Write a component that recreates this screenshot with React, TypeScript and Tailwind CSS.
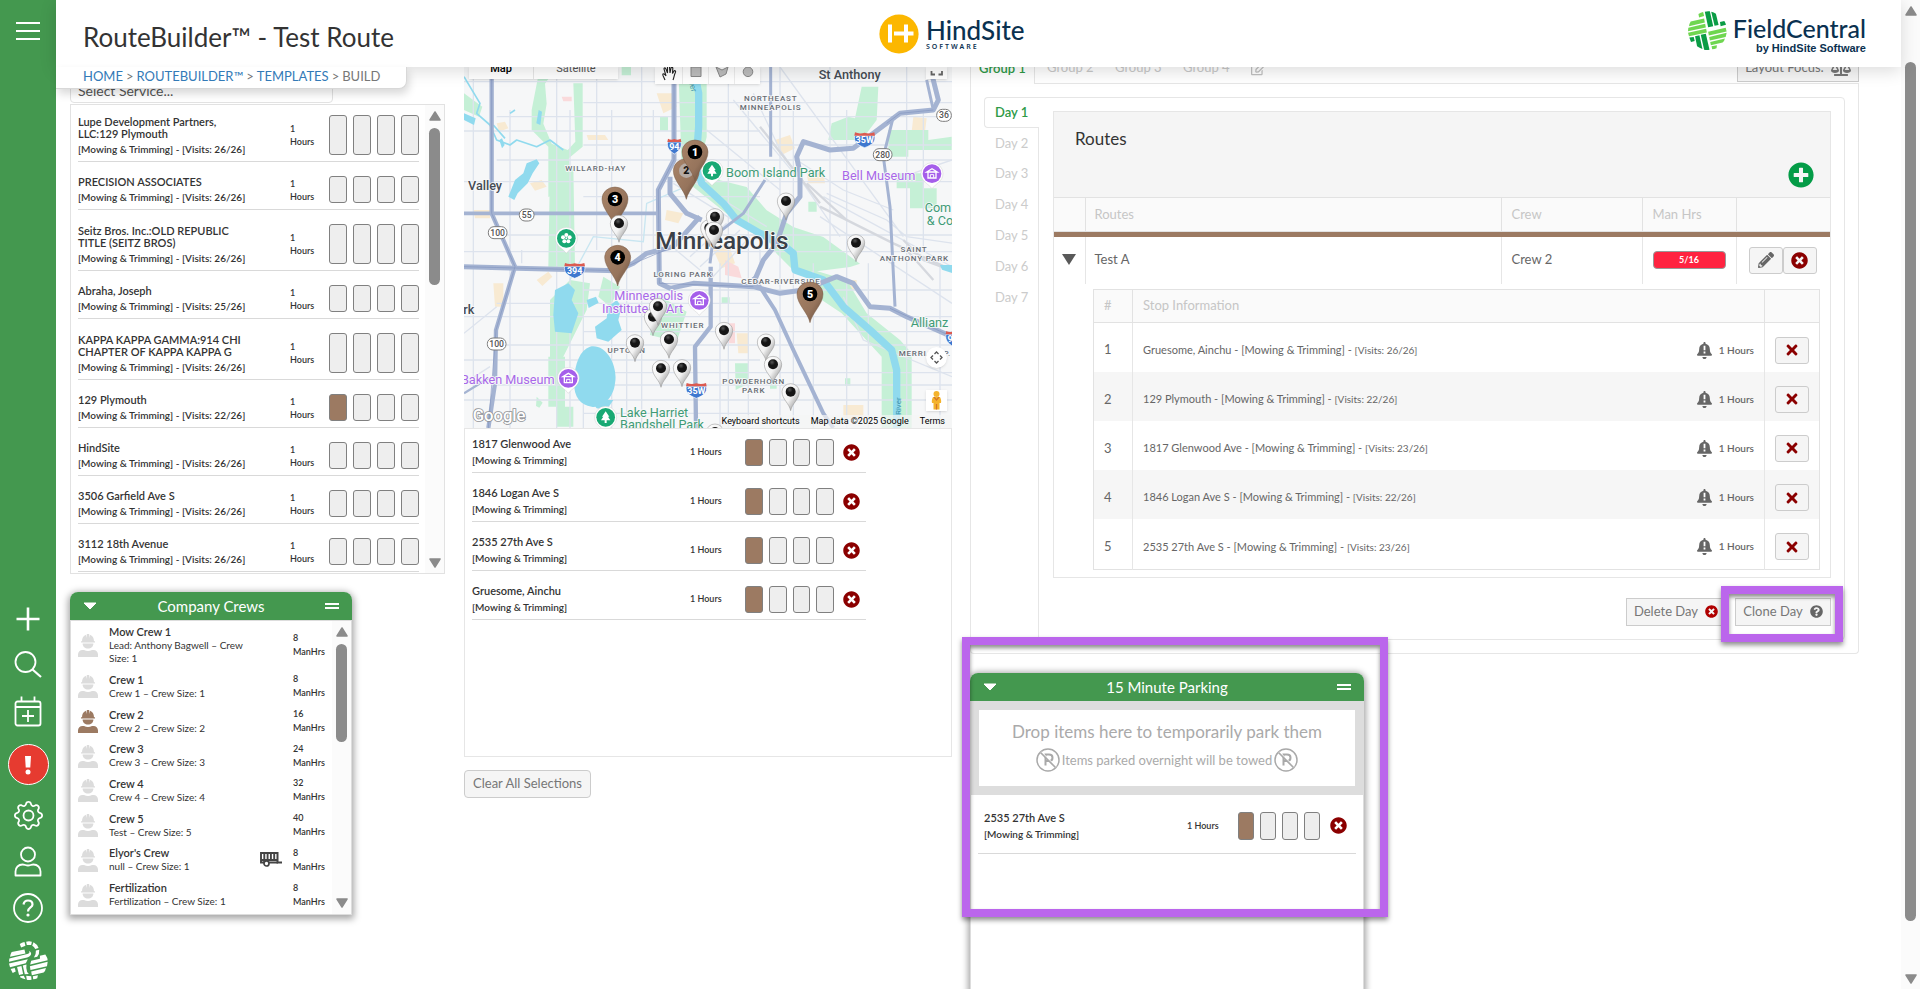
import React from "react";
import {
  FaBalanceScale,
  FaBell,
  FaPencilAlt,
  FaPlusCircle,
  FaQuestionCircle,
  FaRegEdit,
  FaTimes,
  FaTimesCircle,
} from "react-icons/fa";
import { BsGear } from "react-icons/bs";

type Site = { name: string[]; visits: string; filled?: boolean };

const SITES: Site[] = [
  { name: ["Lupe Development Partners,", "LLC:129 Plymouth"], visits: "26/26" },
  { name: ["PRECISION ASSOCIATES"], visits: "26/26" },
  { name: ["Seitz Bros. Inc.:OLD REPUBLIC", "TITLE (SEITZ BROS)"], visits: "26/26" },
  { name: ["Abraha, Joseph"], visits: "25/26" },
  { name: ["KAPPA KAPPA GAMMA:914 CHI", "CHAPTER OF KAPPA KAPPA G"], visits: "26/26" },
  { name: ["129 Plymouth"], visits: "22/26", filled: true },
  { name: ["HindSite"], visits: "26/26" },
  { name: ["3506 Garfield Ave S"], visits: "26/26" },
  { name: ["3112 18th Avenue"], visits: "26/26" },
];

const CREWS = [
  { name: "Mow Crew 1", info: "Lead: Anthony Bagwell – Crew Size: 1", hrs: 8 },
  { name: "Crew 1", info: "Crew 1 – Crew Size: 1", hrs: 8 },
  { name: "Crew 2", info: "Crew 2 – Crew Size: 2", hrs: 16, active: true },
  { name: "Crew 3", info: "Crew 3 – Crew Size: 3", hrs: 24 },
  { name: "Crew 4", info: "Crew 4 – Crew Size: 4", hrs: 32 },
  { name: "Crew 5", info: "Test – Crew Size: 5", hrs: 40 },
  { name: "Elyor's Crew", info: "null – Crew Size: 1", hrs: 8, trailer: true },
  { name: "Fertilization", info: "Fertilization – Crew Size: 1", hrs: 8 },
];

const SELECTED = ["1817 Glenwood Ave", "1846 Logan Ave S", "2535 27th Ave S", "Gruesome, Ainchu"];

const STOPS = [
  { name: "Gruesome, Ainchu", visits: "26/26" },
  { name: "129 Plymouth", visits: "22/26" },
  { name: "1817 Glenwood Ave", visits: "23/26" },
  { name: "1846 Logan Ave S", visits: "22/26" },
  { name: "2535 27th Ave S", visits: "23/26" },
];

function WeaveLogo({ className }: { className: string }) {
  return (
    <svg viewBox="0 0 116 116" className={className} aria-hidden="true">
      <g fill="#6fd650">
        <path d="M31 9 Q38 4 45 3 L48 15 L33 19Z" />
        <path d="M8 31 L48 22 L50 34 L3 45 Q4 37 8 31Z" />
        <path d="M1 50 L51 38 L53 49 L0 60Z" />
        <path d="M0 65 L54 53 L56 64 L3 75Z" />
        <path d="M60 62 L112 50 L115 61 L62 73Z" />
        <path d="M63 77 L115 65 L112 77 L65 88Z" />
        <path d="M66 92 L110 82 Q108 90 103 94 L68 102Z" />
        <path d="M70 105 L86 102 L85 111 Q79 114 72 114Z" />
      </g>
      <g fill="#0a9c45">
        <path d="M50 2 Q58 0 65 1 L75 45 L60 48Z" />
        <path d="M69 2 Q77 4 83 8 L91 42 L79 44Z" />
        <path d="M95 33 L108 30 Q112 36 113 41 L97 45Z" />
        <path d="M4 79 L17 77 L20 89 L9 92Z" />
        <path d="M21 75 L34 72 L43 113 Q34 110 27 105Z" />
        <path d="M38 71 L53 68 L64 115 Q56 117 48 115Z" />
      </g>
    </svg>
  );
}

function WeaveMark({ className }: { className: string }) {
  return (
    <svg viewBox="0 0 116 116" className={className} fill="#fff" aria-hidden="true">
      <path d="M32 9 Q38 5 46 3 L49 14 L36 19Z" />
      <path d="M51 2 Q60 0 68 2 L66 12 L53 12Z" />
      <path d="M73 4 Q84 10 88 21 L78 24 Q75 16 69 14Z" />
      <path d="M80 28 L90 26 Q91 38 84 47 L74 49 Q81 40 80 28Z" />
      <path d="M8 33 L46 25 L49 37 L3 47 Q4 39 8 33Z" />
      <path d="M1 52 L57 38 Q63 36 60 30 Q70 36 63 44 Q60 47 54 49 L0 62Z" />
      <path d="M0 67 L56 54 L50 66 L3 78Z" />
      <path d="M66 59 L92 53 V44 L108 40 Q115 50 115 57 L63 70Z" />
      <path d="M62 75 L115 62 L113 75 L64 86Z" />
      <path d="M66 91 L110 80 Q108 90 103 94 L68 102Z" />
      <path d="M5 83 L17 80 L20 91 L11 95Z" />
      <path d="M24 77 L37 74 L42 98 L30 101Z" />
      <path d="M41 73 L52 70 Q50 80 54 92 L59 98 L47 99Z" />
      <path d="M33 105 L44 103 L49 114 Q41 112 33 108Z" />
      <path d="M51 103 L66 105 L67 115 Q59 117 53 115Z" />
      <path d="M71 105 L86 102 L84 111 Q79 114 72 114Z" />
    </svg>
  );
}

function Arrow({ up }: { up?: boolean }) {
  return (
    <svg viewBox="0 0 12 10" className="h-[10px] w-3 shrink-0" aria-hidden="true">
      <path
        d={up ? "M6 1 L11 9 H1Z" : "M6 9 L11 1 H1Z"}
        fill="#8b8b8b"
        stroke="#8b8b8b"
        strokeWidth="1.5"
        strokeLinejoin="round"
      />
    </svg>
  );
}

function ScrollTrack({ thumb, className }: { thumb: string; className: string }) {
  return (
    <div className={"flex shrink-0 flex-col items-center bg-[#fbfbfb] " + className}>
      <Arrow up />
      <div className={"w-[11px] rounded-full bg-[#8b8b8b] " + thumb} />
      <div className="flex-1" />
      <Arrow />
    </div>
  );
}

function DayBoxes({ filled, className }: { filled?: boolean; className: string }) {
  return (
    <div className={"flex shrink-0 gap-[6px] " + className}>
      {[0, 1, 2, 3].map((i) => (
        <span
          key={i}
          className={
            "flex-1 rounded-[3px] border border-[#808080] " +
            (filled && i === 0 ? "bg-[#9c7a62]" : "bg-[#eeeeee]")
          }
        />
      ))}
    </div>
  );
}

function RemoveButton({ className }: { className?: string }) {
  return (
    <button type="button" aria-label="Remove" className={className}>
      <FaTimesCircle className="size-[17px] text-[#8b0000]" />
    </button>
  );
}

function Sidebar() {
  const line = { fill: "none", stroke: "#fff", strokeWidth: 1.8 } as const;
  return (
    <nav className="flex w-14 shrink-0 flex-col items-center bg-[#44984f] text-white">
      <button type="button" aria-label="Menu" className="mt-[21px] flex h-5 w-6 flex-col justify-between py-px">
        <span className="h-[2px] w-full bg-white" />
        <span className="h-[2px] w-full bg-white" />
        <span className="h-[2px] w-full bg-white" />
      </button>
      <div className="flex-1" />
      <button type="button" aria-label="Add">
        <svg viewBox="0 0 24 24" className="size-6">
          <path d="M12 0.500V23.500M0.500 12H23.500" {...line} strokeWidth="2.600" />
        </svg>
      </button>
      <button type="button" aria-label="Search" className="mt-[19px]">
        <svg viewBox="0 0 28 28" className="size-7">
          <circle cx="11.500" cy="12" r="10" {...line} />
          <path d="M18.500 19.500L27 27" {...line} strokeWidth="2.200" />
        </svg>
      </button>
      <button type="button" aria-label="Schedule" className="mt-[18px]">
        <svg viewBox="0 0 28 31" className="h-[31px] w-7">
          <rect x="1.500" y="5.500" width="25" height="24" rx="2" {...line} />
          <path d="M1 11H27M7.500 0.500V5M20.500 0.500V5" {...line} />
          <path d="M14 14V26M8 20H20" {...line} />
        </svg>
      </button>
      <button
        type="button"
        aria-label="Alerts"
        className="mt-[17px] flex size-[41px] items-center justify-center rounded-full border border-white bg-[#e63b30]"
      >
        <svg viewBox="0 0 8 20" className="h-5 w-2">
          <path d="M1 1H7L6.300 12.500H1.700Z" fill="#fff" />
          <circle cx="4" cy="17" r="2.500" fill="#fff" />
        </svg>
      </button>
      <button type="button" aria-label="Settings" className="mt-[16px]">
        <BsGear className="size-[29px]" />
      </button>
      <button type="button" aria-label="Account" className="mt-[16px]">
        <svg viewBox="0 0 28 31" className="h-[31px] w-7">
          <circle cx="14" cy="8.500" r="7" {...line} />
          <path d="M1.500 29.500V25.500C1.500 21.500 4.500 18.500 8.500 18.500C11 18.500 11.500 19.500 14 19.500S17 18.500 19.500 18.500C23.500 18.500 26.500 21.500 26.500 25.500V29.500Z" {...line} strokeLinejoin="round" />
        </svg>
      </button>
      <button type="button" aria-label="Help" className="mt-[16px]">
        <svg viewBox="0 0 30 30" className="size-[30px]">
          <circle cx="15" cy="15" r="14" {...line} />
          <path d="M10.500 11.500C11 8.500 13 7.500 15 7.500C17.500 7.500 19.500 9 19.500 11.500C19.500 14.500 15 14.500 15 18.500" {...line} strokeWidth="2.200" />
          <circle cx="15" cy="22" r="1.600" fill="#fff" />
        </svg>
      </button>
      <WeaveMark className="mt-[18px] mb-[9px] size-[39px]" />
    </nav>
  );
}

function Header() {
  return (
    <header className="relative z-20 flex h-[67px] shrink-0 items-center bg-white pl-[27px] shadow-[0_4px_16px_rgba(0,0,0,0.14)]">
      <h1 className="mt-[7px] w-[796px] text-[26px] leading-8 text-[#333]">RouteBuilder™ - Test Route</h1>
      <div className="flex items-center gap-[7px] text-[#0a3150]">
        <svg viewBox="0 0 40 40" className="size-10 shrink-0" aria-hidden="true">
          <circle cx="20" cy="20" r="19.600" fill="#fcb700" />
          <path d="M9 10.500H13V28.500H9ZM25 10.500H29V17.500H34.500V21.500H29V28.500H25V21.500H15V17.500H25Z" fill="#fff" />
        </svg>
        <div>
          <span className="block text-[26px] leading-[26px] font-medium">HindSite</span>
          <span className="block font-['Noto_Sans',sans-serif] text-[7px] leading-[7px] font-semibold tracking-[2px]">
            SOFTWARE
          </span>
        </div>
      </div>
      <div className="mr-[35px] ml-auto flex items-start">
        <WeaveLogo className="mt-[-3px] size-[39px]" />
        <div className="ml-[6px] flex flex-col items-end text-[#0a3150]">
          <span className="text-[25px] leading-7 font-medium">FieldCentral</span>
          <span className="font-['Liberation_Sans',sans-serif] text-[11px] leading-3 font-bold">
            by HindSite Software
          </span>
        </div>
      </div>
      <nav
        aria-label="Breadcrumb"
        className="absolute top-full left-0 flex h-[22px] items-center gap-[3px] rounded-br-lg border-r border-b border-[#d8d8d8] bg-white pr-[26px] pb-px pl-[27px] text-[13px] text-[#777] shadow-[2px_5px_8px_rgba(0,0,0,0.15)]"
      >
        <a href="#home" className="text-[#337ab7]">HOME</a>
        <span>&gt;</span>
        <a href="#routebuilder" className="text-[#337ab7]">ROUTEBUILDER™</a>
        <span>&gt;</span>
        <a href="#templates" className="text-[#337ab7]">TEMPLATES</a>
        <span>&gt;</span>
        <span>BUILD</span>
      </nav>
    </header>
  );
}

function SiteList() {
  return (
    <div className="flex h-[470px] overflow-hidden border border-[#e2e2e2]">
      <ul className="min-w-0 flex-1 pr-[6px] pl-[7px]">
        {SITES.map((s, i) => (
          <li
            key={s.name[0]}
            className={
              "flex items-center border-b border-[#d9d9d9] pb-[6px] font-semibold text-[#333] " +
              (i === 0 ? "pt-[10px]" : "pt-[14px]")
            }
          >
            <div className="flex-1">
              <p className="text-[11px] leading-3">
                {s.name.map((n) => (
                  <span key={n} className="block">{n}</span>
                ))}
              </p>
              <p className="mt-[3px] text-[10px] leading-3">[Mowing &amp; Trimming] - [Visits: {s.visits}]</p>
            </div>
            <p className="w-[39px] text-[9px] leading-[13px]">
              1<br />Hours
            </p>
            <DayBoxes
              filled={s.filled}
              className={"w-[90px] " + (s.name.length > 1 ? "h-10" : "h-[27px]")}
            />
          </li>
        ))}
      </ul>
      <ScrollTrack className="w-[19px] pt-[6px] pb-[5px]" thumb="mt-[7px] h-[157px]" />
    </div>
  );
}

function PanelHeader({ title }: { title: string }) {
  return (
    <header className="flex h-7 shrink-0 items-center justify-between rounded-t-lg bg-[#44984f] px-[13px] text-white">
      <button type="button" aria-label={"Collapse " + title}>
        <svg viewBox="0 0 14 8" className="h-2 w-[14px]">
          <path d="M1 1H13L7 7Z" fill="#fff" stroke="#fff" strokeLinejoin="round" />
        </svg>
      </button>
      <h2 className="text-[15px] leading-5">{title}</h2>
      <span className="flex w-[14px] flex-col gap-[2px]">
        <span className="h-[2px] bg-white" />
        <span className="h-[2px] bg-white" />
      </span>
    </header>
  );
}

function Worker({ active }: { active?: boolean }) {
  return (
    <svg viewBox="0 0 20 24" className="h-6 w-5" fill={active ? "#9c7a62" : "#dcdcdc"} aria-hidden="true">
      <path d="M4 8.300C4 4.800 5.500 2.700 8 1.700L8.800 5V1H11.200V5L12 1.700C14.500 2.700 16 4.800 16 8.300H17V9.400H3V8.300Z" />
      <path d="M4.600 10.400H15.400C15.400 13.500 13 15.600 10 15.600S4.600 13.500 4.600 10.400Z" />
      <path d="M0 24V21.500C0 19 2 17 4.500 17H6C8.500 18.200 11.500 18.200 14 17H15.500C18 17 20 19 20 21.500V24Z" />
    </svg>
  );
}

function CrewPanel() {
  return (
    <section className="mt-[18px] flex h-[323px] w-[282px] flex-col rounded-t-lg shadow-[0_2px_7px_2px_rgba(0,0,0,0.35)]">
      <PanelHeader title="Company Crews" />
      <div className="flex min-h-0 flex-1 border border-[#dddddd] bg-white">
        <ul className="grid h-[291px] flex-1 grid-rows-[48px_repeat(7,1fr)] pl-[7px]">
          {CREWS.map((c) => (
            <li key={c.name} className="flex items-center">
              <Worker active={c.active} />
              <div className="ml-[11px] w-[135px] text-[#333]">
                <p className="text-[11px] leading-[14px] font-semibold">{c.name}</p>
                <p className="text-[10px] leading-[13px]">{c.info}</p>
              </div>
              <span className="flex w-[49px] justify-center">
                {c.trailer && (
                  <svg viewBox="0 0 22 15" className="ml-[4px] h-[15px] w-[22px]" aria-hidden="true">
                    <path d="M1 1H17.500V10.500H22" fill="none" stroke="#444" strokeWidth="2" />
                    <path d="M1 0V10.500H18M4.300 1V10M7.600 1V8M10.900 1V8M14.200 1V8M1 8H18" fill="none" stroke="#444" strokeWidth="1.900" />
                    <circle cx="6.500" cy="11.500" r="2.500" fill="#fff" stroke="#444" strokeWidth="1.700" />
                  </svg>
                )}
              </span>
              <p className="text-[9px] leading-[14px] font-semibold text-[#333]">
                {c.hrs}
                <br />
                ManHrs
              </p>
            </li>
          ))}
        </ul>
        <ScrollTrack className="w-[19px] pt-[6px] pb-[6px]" thumb="mt-[7px] h-[98px]" />
      </div>
    </section>
  );
}

const WHITE_PINS = [
  [477, 577], [978, 510], [1188, 635], [748, 590], [765, 557], [762, 597], [579, 857], [594, 826],
  [525, 935], [627, 925], [792, 898], [918, 933], [939, 1000], [992, 1082], [603, 1012], [666, 1010], [765, 1203],
];

const DISTRICTS: [number, number, string][] = [
  [932, 154, "NORTHEAST"], [932, 179, "MINNEAPOLIS"], [407, 362, "WILLARD-HAY"], [669, 680, "LORING PARK"],
  [963, 702, "CEDAR-RIVERSIDE"], [668, 834, "WHITTIER"], [500, 910, "UPTOWN"], [881, 1003, "POWDERHORN"],
  [881, 1028, "PARK"], [1362, 606, "SAINT"], [1363, 632, "ANTHONY PARK"],
];

function Interstate({ x, y, n }: { x: number; y: number; n: string }) {
  const w = n.length > 2 ? 30 : 20;
  return (
    <g transform={`translate(${x} ${y})`}>
      <path d={`M${-w} -12 H${w} C${w + 4} 6 ${w - 8} 16 0 24 C${8 - w} 16 ${-w - 4} 6 ${-w} -12Z`} fill="#3f78cf" stroke="#fff" strokeWidth="2" />
      <path d={`M${1 - w} -22 Q${-w / 2} -16 0 -21 Q${w / 2} -16 ${w - 1} -22 L${w + 1} -12 H${-w - 1}Z`} fill="#dc5a50" />
      <text y="11" textAnchor="middle" fontSize="27" fontWeight="700" fill="#fff">{n}</text>
    </g>
  );
}

function StateRoad({ x, y, n }: { x: number; y: number; n: string }) {
  const w = n.length > 2 ? 28 : 22;
  return (
    <g>
      <rect x={x - w} y={y - 18} width={w * 2} height="36" rx="17" fill="#fff" stroke="#7d7d7d" strokeWidth="3" />
      <text x={x} y={y + 9} textAnchor="middle" fontSize="26" fontWeight="500" fill="#555">{n}</text>
    </g>
  );
}

function Poi({ x, y, color, kind }: { x: number; y: number; color: string; kind: "tree" | "museum" | "flower" }) {
  return (
    <g transform={`translate(${x} ${y})`}>
      <path d="M0 45 C-8 32 -33 24 -33 0 A33 33 0 0 1 33 0 C33 24 8 32 0 45Z" fill="#fff" stroke="#bbb" strokeWidth="1" />
      <circle r="28" fill={color} />
      {kind === "tree" && <path d="M0 -18 L11 -2 H7 L14 9 H3 V17 H-3 V9 H-14 L-7 -2 H-11Z" fill="#fff" />}
      {kind === "museum" && (
        <g fill="none" stroke="#fff" strokeWidth="4">
          <path d="M-16 -5 L0 -15 L16 -5Z M-12 -3V13H12V-3" />
          <path d="M-5 12V3H5V12" strokeWidth="3" />
        </g>
      )}
      {kind === "flower" && (
        <g fill="#fff">
          <circle cy="-10" r="6" /><circle cx="10" cy="-3" r="6" /><circle cx="6" cy="9" r="6" />
          <circle cx="-6" cy="9" r="6" /><circle cx="-10" cy="-3" r="6" /><circle r="3" />
        </g>
      )}
    </g>
  );
}

function RoutePin({ x, y, n, faded }: { x: number; y: number; n: number; faded?: boolean }) {
  return (
    <g transform={`translate(${x} ${y})`}>
      <path d="M0 0 C-6 -30 -39 -55 -39 -86 A39 36 0 0 1 39 -86 C39 -55 6 -30 0 0Z" fill="url(#brownPin)" stroke="#7a5c47" strokeWidth="1.500" />
      <circle cy="-86" r="22" fill={faded ? "#b5aba4" : "#000"} />
      <text y="-75" textAnchor="middle" fontSize="32" fontWeight="900" fill={faded ? "#111" : "#fff"}>{n}</text>
    </g>
  );
}

function CityMap() {
  const vertical = [40, 150, 185, 290, 330, 370, 410, 455, 500, 545, 580, 780, 805, 865, 900, 960, 1000, 1060, 1110, 1160, 1225, 1340, 1390, 1440];
  const horizontal = [95, 158, 200, 243, 285, 330, 395, 440, 555, 605, 720, 760, 800, 845, 885, 930, 968, 1005, 1050, 1090];
  return (
    <svg viewBox="12 51 1464 1083" preserveAspectRatio="xMidYMid slice" className="block size-full font-[Roboto,sans-serif]" role="img" aria-label="Map of Minneapolis">
      <defs>
        <linearGradient id="brownPin" x1="0" x2="1" y2="1">
          <stop offset="0" stopColor="#a98468" /><stop offset="0.6" stopColor="#96745c" /><stop offset="1" stopColor="#5d4636" />
        </linearGradient>
        <linearGradient id="whitePin" x1="0" x2="1" y2="1">
          <stop offset="0" stopColor="#fff" /><stop offset="0.5" stopColor="#f2f2f2" /><stop offset="1" stopColor="#777" />
        </linearGradient>
        <radialGradient id="blackDot" cx="0.4" cy="0.3">
          <stop offset="0" stopColor="#555" /><stop offset="0.6" stopColor="#151515" />
        </radialGradient>
      </defs>
      <rect x="12" y="51" width="1464" height="1083" fill="#f6f7f8" />
      <g fill="#f8ead2">
        <path d="M110 220l25-5 10 20-28 10zM210 400l35-10 15 20-35 12zM435 430l40-5 5 25-40 8zM40 480h50v25h-45zM230 690l35-25 12 15-30 28zM380 255h55l10 15h-60zM590 130h50l10 40-40 20zM945 270l45-15 15 40-40 20zM1040 370l50-5 5 35h-50zM760 600l45-20 20 60-40 15zM1130 690h60v30h-50zM1360 200l40 5-5 40h-40zM1150 1065h60v40h-60zM830 850h35v60h-30zM100 700h30v70h-25zM620 480l50 10-15 30-40-10z" />
      </g>
      <g fill="#fadadb">
        <path d="M305 140h30v14h-25zM795 630l40 20 10 35-50-10zM795 820h30v60h-35z" />
      </g>
      <g fill="#c5f0d6">
        <path d="M485 51h28v25h-28zM240 51h50l-35 50 5 60-10 60 25 60 50 20 8 110-68 30V290l-50-50V180zM340 100h28v190l-60 50-12-10 50-55zM655 51h85v210l-20 80 60 50 80 20 60 70 80 50 90 30 110 80-30 10-160 20-60-60-40-60-60-20-150-120-35-60zM270 350h70l5 300h-80zM1205 110h50l-5 100-45 60H1105l10-50 50-20 20 5zM1285 240h120v30l70-10v40h-130v20h-60zM1310 370h80v45h40v60h-80v-60h-40zM1045 455h25v30h-25zM600 200h24v42h-24zM585 730l95 55-30 90-80-20zM430 680l50 30-30 60-35-30zM270 750l60-60 60 10-10 80-80 160h-30zM265 920h50v150h-50zM290 1070h50v60h-50zM230 1040l18 18-10 15-10-5zM1155 985h16v22h-16zM825 940h42v60l-40 20zM785 742h24v20h-24zM1060 660l100 30 60 100 100 80 35 40v225h-90V920l-120-130-90-60zM930 1000h20v16h-20zM12 130l55 40-10 30-45-20z" />
      </g>
      <g fill="none" stroke="#dde3ed" strokeWidth="4">
        {vertical.map((x, i) => (
          <path key={x} d={`M${x} ${i % 3 === 0 ? 51 : i % 3 === 1 ? 180 : 640}V${i % 4 === 2 ? 600 : 1134}`} />
        ))}
        {horizontal.map((y, i) => (
          <path key={y} d={`M${i % 3 === 0 ? 12 : i % 3 === 1 ? 370 : 110} ${y}H${i % 4 === 3 ? 900 : 1476}`} />
        ))}
        <path d="M12 850L110 770M12 1000L90 950M640 400L900 560M660 370L920 530M690 620L800 520M720 650L840 540M750 690L870 560M740 240L960 420M820 150L1010 380M1080 500L1476 760M1090 440L1476 650M960 51L1330 560M1010 330L1150 420L1300 480M880 130L960 300L1140 560M1476 330L1330 380M1150 740L1210 870L1476 980M1100 430l180 80 60 50 140 20M600 560l120 100" />
      </g>
      <path d="M1080 470L1300 580L1476 660M1330 570l60 60 80 30M1040 400l120 110M900 230l180 230M1340 600l80 90" fill="none" stroke="#d5d8de" strokeWidth="7" />
      <g fill="none" stroke="#c9e6f1" strokeWidth="4">
        <path d="M330 690L400 560L550 575L560 460L700 400" />
      </g>
      <g fill="none" stroke="#90daee" strokeLinejoin="round">
        <path d="M12 80L60 160L50 190L90 225L110 270L150 285L170 270L230 290L270 270L310 300" strokeWidth="5" />
        <path d="M100 225l35 40M170 51l-30 30M150 190l15-10" strokeWidth="5" />
        <path d="M700 51L716 130V230L708 340L725 400L790 460L830 510L900 550L975 590L1000 610L1005 660L1090 690L1150 770L1230 840L1295 900L1310 960V1134" strokeWidth="22" />
      </g>
      <g fill="#90daee">
        <path d="M145 440l20-50 25-20 10-30 30-12 8 12-20 30-15 30-30 30-10 20zM285 720l40-20 20 20-10 30 20 40-20 60-50-5-5-50zM405 830l35-25 5-35 25-20 15 20-10 40 10 30-40 35-35-10zM390 890C440 880 475 950 465 1000C460 1050 420 1075 395 1070C360 1065 340 1040 342 990C345 940 360 900 390 890ZM380 750l28-10 8 18-30 16zM1440 645h36v24l-30-10zM12 190l35 15-5 20-30-15zM265 51h30l-10 18-15-5zM372 51h12v8h-10zM118 270l8-5 8 20-8 10zM236 180l10 5-5 40-12-5zM390 1050l70 0-20 30-30-5z" />
      </g>
      <g fill="none" stroke="#a4b3d2" strokeWidth="13" strokeLinejoin="round">
        <path d="M95 51V490L130 570L165 650L135 750L108 840L105 1000L85 1134" />
        <path d="M12 490H590" strokeWidth="11" />
        <path d="M12 650L170 655L470 662L520 640L560 610L640 590L720 500" strokeWidth="15" />
        <path d="M642 51V330L595 420L598 700L630 715L700 700L880 710L960 730L1030 720L1130 680L1180 700L1230 770L1290 775L1340 800L1476 860" strokeWidth="15" />
        <path d="M630 380V430L680 490L725 510M880 700L910 630L950 580L980 490L1020 440V370L1010 320L1030 275L1110 300L1180 295L1280 220L1320 190L1420 180L1435 150L1410 51" strokeWidth="15" />
        <path d="M1300 200L1270 320L1290 470L1305 770M1420 180L1400 90M932 51V320M915 390L850 490L760 560L750 640" strokeWidth="9" />
        <path d="M752 650V830L705 890L708 1134" />
        <path d="M880 680L945 780L1000 900L1090 1090L1120 1134" strokeWidth="12" />
        <path d="M12 1030L85 985" strokeWidth="7" />
      </g>
      <g fill="none" stroke="#8396c0" strokeWidth="2">
        <path d="M95 51V490L165 650L108 840L85 1134M12 650L470 662L640 590M642 51V330L595 420L598 700L880 710M1290 775L1476 860M1280 220L1320 190L1420 180" />
      </g>
      <g fill="#454b54" stroke="#f8f9fa" strokeWidth="5" paintOrder="stroke">
        <text x="586" y="597" fontSize="73" fontWeight="500" fill="#3a4048">Minneapolis</text>
        <text x="1076" y="86" fontSize="38" fontWeight="500">St Anthony</text>
        <text x="24" y="421" fontSize="38" fontWeight="500">Valley</text>
        <text x="10" y="792" fontSize="38" fontWeight="500">rk</text>
        <g fontSize="24" fontWeight="500" textAnchor="middle" letterSpacing="2.500" fill="#676c73">
          {DISTRICTS.map(([x, y, t]) => (
            <text key={t} x={x} y={y}>{t}</text>
          ))}
          <text x="1316" y="919" textAnchor="start">MERRIAM P.</text>
        </g>
        <g fontSize="38" fill="#3f9b76">
          <text x="798" y="381">Boom Island Park</text>
          <text x="1394" y="485">Com</text>
          <text x="1400" y="525">&amp; Co</text>
          <text x="1352" y="831">Allianz</text>
          <text x="480" y="1101">Lake Harriet</text>
          <text x="480" y="1138">Bandshell Park</text>
        </g>
        <g fontSize="38" fill="#a868e8">
          <text x="1146" y="390">Bell Museum</text>
          <text x="463" y="750">Minneapolis</text>
          <text x="426" y="790">Institute of Art</text>
          <text x="284" y="1003" textAnchor="end">Bakken Museum</text>
        </g>
      </g>
      <g fontSize="24" fill="#3c93ad">
        <text transform="translate(1323 1095) rotate(-90)">River</text>
        <text transform="translate(685 90) rotate(75)">iver</text>
      </g>
      <Interstate x={643} y={288} n="94" />
      <Interstate x={1214} y={269} n="35W" />
      <Interstate x={344} y={661} n="394" />
      <Interstate x={709} y={1021} n="35W" />
      <Interstate x={1478} y={865} n="94" />
      <StateRoad x={200} y={495} n="55" />
      <StateRoad x={113} y={548} n="100" />
      <StateRoad x={110} y={882} n="100" />
      <StateRoad x={1268} y={314} n="280" />
      <StateRoad x={1452} y={196} n="36" />
      <Poi x={756} y={362} color="#19a974" kind="tree" />
      <Poi x={437} y={1102} color="#19a974" kind="tree" />
      <Poi x={319} y={565} color="#19a974" kind="flower" />
      <Poi x={1416} y={371} color="#a55eea" kind="museum" />
      <Poi x={718} y={751} color="#a55eea" kind="museum" />
      <Poi x={325} y={985} color="#a55eea" kind="museum" />
      <RoutePin x={679} y={448} n={2} faded />
      <RoutePin x={705} y={392} n={1} />
      <RoutePin x={465} y={533} n={3} />
      <RoutePin x={473} y={708} n={4} />
      <RoutePin x={1050} y={818} n={5} />
      {WHITE_PINS.map(([x, y]) => (
        <g key={x + "-" + y} transform={`translate(${x} ${y})`}>
          <path d="M0 0 C-4 -22 -26 -34 -26 -57 A26 24 0 0 1 26 -57 C26 -34 4 -22 0 0Z" fill="url(#whitePin)" stroke="#8d8d8d" strokeWidth="1.500" />
          <circle cy="-57" r="15" fill="url(#blackDot)" />
        </g>
      ))}
      <text x="38" y="1112" fontSize="50" fontWeight="500" fill="#fff" stroke="#8f9296" strokeWidth="5" paintOrder="stroke">Google</text>
    </svg>
  );
}

function MapPanel() {
  return (
    <div className="relative h-[361px] overflow-hidden font-[Roboto,sans-serif]">
      <CityMap />
      <div className="absolute top-0 left-[5px] flex h-3 items-end bg-white text-[11px] leading-4 shadow-sm">
        <button type="button" className="h-5 w-[65px] border-r border-[#e6e6e6] font-medium text-black">Map</button>
        <button type="button" className="h-5 w-[84px] text-[#565656]">Satellite</button>
      </div>
      <div className="absolute top-0 left-[191px] flex h-[17px] bg-white shadow-sm">
        <button type="button" aria-label="Pan" className="flex w-[27px] justify-center">
          <svg viewBox="0 0 16 16" className="size-4">
            <path d="M4 13C3 10 1 8 2 7S5 9 5 9L3 2C3 0.500 4.500 0.500 5 2L6.500 6V0C6.500 -1.500 8.300 -1.500 8.500 0L9 6L10 1C10.300 -0.200 12 0 11.800 1.500L11.500 6.500L13 4C14 3 15 4 14.400 5.500C13 8 13 11 12 13" fill="#fff" stroke="#222" strokeWidth="1.100" />
          </svg>
        </button>
        {["M3 0H13V9.500H3Z", "M2 0L8 3L14 0L12 7L6 10Z", "M8 0A4.800 4.800 0 1 1 8 9.600A4.800 4.800 0 1 1 8 0Z"].map((d, i) => (
          <button key={d} type="button" aria-label={["Rectangle", "Polygon", "Circle"][i]} className="flex w-[26px] justify-center border-l border-[#ececec]">
            <svg viewBox="0 0 16 16" className="size-4">
              <path d={d} fill="#bdbdbd" stroke="#888" />
            </svg>
          </button>
        ))}
      </div>
      <button type="button" aria-label="Full screen" className="absolute top-0 right-[5px] h-3 w-[21px] bg-white shadow-sm">
        <svg viewBox="0 0 21 12" className="h-3 w-[21px]">
          <path d="M5.500 4V7.500H9M12.500 7.500H16V4" fill="none" stroke="#666" strokeWidth="1.800" />
        </svg>
      </button>
      <button type="button" aria-label="Map camera controls" className="absolute right-[5px] bottom-[60px] size-[21px] rounded-full bg-white shadow">
        <svg viewBox="0 0 21 21" className="size-[21px]">
          <path d="M8.500 7L10.500 5L12.500 7M8.500 14L10.500 16L12.500 14M7 8.500L5 10.500L7 12.500M14 8.500L16 10.500L14 12.500" fill="none" stroke="#555" strokeWidth="1.300" />
        </svg>
      </button>
      <button type="button" aria-label="Street view" className="absolute right-[5px] bottom-[17px] size-[21px] bg-white shadow">
        <svg viewBox="0 0 21 21" className="size-[21px]">
          <circle cx="10.500" cy="4" r="3" fill="#f4b32d" />
          <path d="M7 7H14C15 9 15.500 11 15 13H13.500V19.500H7.500V13H6C5.500 11 6 9 7 7Z" fill="#f4b32d" />
          <path d="M8 7L10.500 10L13 7M10.500 14V19.500" fill="none" stroke="#d3762a" strokeWidth="1.200" />
        </svg>
      </button>
      <div className="absolute right-0 bottom-0 flex h-[13px] items-center gap-[11px] bg-[#f5f5f5]/70 pr-[7px] text-[9px] text-black">
        <button type="button">Keyboard shortcuts</button>
        <span>Map data ©2025 Google</span>
        <a href="#terms">Terms</a>
      </div>
    </div>
  );
}

function SelectedList() {
  return (
    <div className="h-[329px] border border-[#e6e6e6] pl-[7px]">
      <ul className="w-[394px]">
        {SELECTED.map((name, i) => (
          <li
            key={name}
            className={
              "flex items-center border-b border-[#d9d9d9] pb-[6px] font-semibold text-[#333] " +
              (i === 0 ? "pt-[9px]" : "pt-[14px]")
            }
          >
            <div className="w-[218px]">
              <p className="text-[11px] leading-3">{name}</p>
              <p className="mt-1 text-[10px] leading-3">[Mowing &amp; Trimming]</p>
            </div>
            <p className="w-[55px] text-[9px]">1 Hours</p>
            <DayBoxes filled className="h-[27px] w-[89px]" />
            <RemoveButton className="ml-[9px]" />
          </li>
        ))}
      </ul>
    </div>
  );
}

const ICON_BUTTON = "flex h-[27px] w-[34px] items-center justify-center rounded-[3px] border border-[#cccccc] bg-[#f5f5f5]";

function RoutesPanel() {
  return (
    <section className="border border-[#e6e6e6]">
      <div className="flex h-[85px] items-end justify-between bg-[#f5f5f5] pr-4 pb-[9px] pl-[21px]">
        <h2 className="mb-[37px] text-[17px] leading-6 text-[#333]">Routes</h2>
        <button type="button" aria-label="Add route">
          <FaPlusCircle className="size-[26px] text-[#049c47]" />
        </button>
      </div>
      <table className="w-full table-fixed border-collapse text-left text-[13px] text-[#666]">
        <colgroup>
          <col className="w-[31px]" />
          <col />
          <col className="w-[141px]" />
          <col className="w-[94px]" />
          <col className="w-[94px]" />
        </colgroup>
        <thead>
          <tr className="h-[34px] border-y border-[#e2e2e2] bg-[#fafafa] text-[#c6c6c6]">
            <th aria-label="Expand" className="border-r border-[#e2e2e2]" />
            <th className="border-r border-[#e2e2e2] px-[9px] font-normal">Routes</th>
            <th className="border-r border-[#e2e2e2] px-[10px] font-normal">Crew</th>
            <th className="border-r border-[#e2e2e2] px-[10px] font-normal">Man Hrs</th>
            <th aria-label="Actions" />
          </tr>
        </thead>
        <tbody>
          <tr className="h-[5px] bg-[#9c7a62]">
            <td colSpan={5} className="p-0" />
          </tr>
          <tr className="h-[47px]">
            <td className="border-r border-[#e6e6e6]">
              <button type="button" aria-label="Collapse route" className="flex w-full justify-center">
                <svg viewBox="0 0 14 12" className="h-3 w-[14px]">
                  <path d="M0 0H14L7 11Z" fill="#595959" />
                </svg>
              </button>
            </td>
            <td className="border-r border-[#e6e6e6] px-[9px]">Test A</td>
            <td className="border-r border-[#e6e6e6] px-[10px]">Crew 2</td>
            <td className="border-r border-[#e6e6e6] px-[10px]">
              <span className="block h-[18px] rounded border border-[#999] bg-[#ff2340] text-center text-[9px] leading-4 font-bold text-white">
                5/16
              </span>
            </td>
            <td>
              <div className="flex pl-3">
                <button type="button" aria-label="Edit route" className={ICON_BUTTON}>
                  <FaPencilAlt className="size-4 text-[#666]" />
                </button>
                <button type="button" aria-label="Delete route" className={ICON_BUTTON}>
                  <FaTimesCircle className="size-[17px] text-[#8b0000]" />
                </button>
              </div>
            </td>
          </tr>
        </tbody>
      </table>
      <div className="pt-[5px] pr-[10px] pb-[7px] pl-[39px]">
        <table className="h-[281px] w-full table-fixed border-collapse border border-[#e2e2e2] text-left text-[13px] text-[#666]">
          <colgroup>
            <col className="w-[39px]" />
            <col />
            <col className="w-[90px]" />
            <col className="w-[55px]" />
          </colgroup>
          <thead>
            <tr className="h-[33px] border-b border-[#e2e2e2] bg-[#fafafa] text-[#c6c6c6]">
              <th className="border-r border-[#e2e2e2] px-[10px] font-normal">#</th>
              <th colSpan={2} className="border-r border-[#e2e2e2] px-[10px] font-normal">Stop Information</th>
              <th aria-label="Remove" />
            </tr>
          </thead>
          <tbody>
            {STOPS.map((s, i) => (
              <tr key={s.name} className={i % 2 ? "bg-[#f6f6f6]" : "bg-white"}>
                <td className="border-r border-[#e6e6e6] px-[10px] pt-[6px]">{i + 1}</td>
                <td className="px-[10px] pt-[6px] text-[11px]">
                  {s.name} - [Mowing &amp; Trimming] - <span className="text-[10px]">[Visits: {s.visits}]</span>
                </td>
                <td className="border-r border-[#e6e6e6] pt-[6px]">
                  <div className="flex items-center justify-end gap-[6px] pr-[10px] text-[10px] font-semibold">
                    <span className="relative">
                      <FaBell className="size-[17px] text-[#666]" />
                      <svg viewBox="0 0 17 17" className="absolute inset-0 size-[17px]" aria-hidden="true">
                        <path d="M8.500 3.800V8.300M8.500 9.600V11.400" stroke="#fff" strokeWidth="1.800" />
                      </svg>
                    </span>
                    1 Hours
                  </div>
                </td>
                <td className="pt-[6px]">
                  <button type="button" aria-label={"Remove " + s.name} className={"mx-auto " + ICON_BUTTON}>
                    <FaTimes className="size-4 text-[#8b0000]" />
                  </button>
                </td>
              </tr>
            ))}
          </tbody>
        </table>
      </div>
    </section>
  );
}

function DayPanel() {
  return (
    <div className="relative rounded-b border border-t-0 border-[#e6e6e6] p-[13px]">
      <div className="flex">
        <div className="w-[54px] shrink-0">
          <div role="tablist" aria-orientation="vertical" className="grid h-[216px] grid-rows-7 text-[13px] text-[#cbcbcb]">
            {[1, 2, 3, 4, 5, 6, 7].map((d) => (
              <button
                key={d}
                type="button"
                role="tab"
                aria-selected={d === 1}
                className={
                  d === 1
                    ? "relative z-10 -mr-px rounded-l border border-r-0 border-[#e6e6e6] bg-white pl-[10px] text-left font-semibold text-[#2e9a47]"
                    : "pl-[11px] text-left"
                }
              >
                Day {d}
              </button>
            ))}
          </div>
        </div>
        <div className="min-w-0 flex-1 rounded-r border border-[#e6e6e6] p-[13px] pl-[14px]">
          <RoutesPanel />
          <div className="mt-5 flex justify-end gap-[9px] text-[13px] text-[#777]">
            <button type="button" className="flex h-7 w-[100px] items-center justify-center gap-[7px] border border-[#cccccc] bg-[#f5f5f5]">
              Delete Day <FaTimesCircle className="size-[13px] text-[#b00000]" />
            </button>
            <div className="relative">
              <button type="button" className="flex h-7 w-24 items-center justify-center gap-[7px] border border-[#cccccc] bg-[#f5f5f5]">
                Clone Day <FaQuestionCircle className="size-[13px] text-[#666]" />
              </button>
              <div className="pointer-events-none absolute -top-3 -right-3 -bottom-4 -left-[14px] border-8 border-[#bb66ec] shadow-[0_3px_5px_rgba(0,0,0,0.45),inset_0_3px_4px_rgba(0,0,0,0.45)]" />
            </div>
          </div>
        </div>
      </div>
    </div>
  );
}

function NoParking() {
  return (
    <svg viewBox="0 0 24 24" className="size-6" fill="none" stroke="#a9a9a9" aria-hidden="true">
      <circle cx="12" cy="12" r="11" strokeWidth="1.500" />
      <path d="M9.500 17.500V6.500H13C15.500 6.500 16.500 8 16.500 9.700S15.500 13 13 13H9.500" strokeWidth="2" />
      <path d="M5 4L20 19" strokeWidth="1.500" stroke="#fff" />
      <path d="M4.500 4.500L19.500 19.500" strokeWidth="1.700" />
    </svg>
  );
}

function ParkingPanel() {
  return (
    <section className="relative mt-[19px] h-[440px] w-[394px]">
      <div className="flex h-full flex-col rounded-t-lg bg-white shadow-[0_1px_6px_2px_rgba(0,0,0,0.35)]">
        <PanelHeader title="15 Minute Parking" />
        <div className="border-[9px] border-[#dddddd] bg-white py-[10px] text-center text-[#aaaaaa]">
          <p className="text-[17px] leading-6">Drop items here to temporarily park them</p>
          <p className="flex items-center justify-center gap-[2px] pt-1 pb-1 text-[13px] leading-6">
            <NoParking />
            Items parked overnight will be towed
            <NoParking />
          </p>
        </div>
        <div className="flex-1 border-x border-[#dddddd] px-[7px]">
          <div className="flex items-center border-b border-[#d9d9d9] pt-[17px] pr-[9px] pb-[13px] pl-[6px] font-semibold text-[#333]">
            <div className="flex-1">
              <p className="text-[11px] leading-3">2535 27th Ave S</p>
              <p className="mt-1 text-[10px] leading-3">[Mowing &amp; Trimming]</p>
            </div>
            <p className="w-[51px] text-[9px]">1 Hours</p>
            <DayBoxes filled className="h-[28px] w-[82px]" />
            <RemoveButton className="ml-[10px]" />
          </div>
        </div>
      </div>
      <div className="pointer-events-none absolute -top-9 -left-2 h-[280px] w-[426px] border-8 border-[#bb66ec] shadow-[0_3px_5px_rgba(0,0,0,0.45),inset_0_3px_4px_rgba(0,0,0,0.45)]" />
    </section>
  );
}

function GroupTabs() {
  return (
    <div className="-mt-[14px] flex h-[31px] items-stretch text-[13px] text-[#c9c9c9]" role="tablist">
      <button type="button" role="tab" aria-selected="true" className="w-[65px] border-x border-[#e6e6e6] font-semibold text-[#2e9a47]">
        Group 1
      </button>
      <div className="flex flex-1 items-stretch border-b border-[#e6e6e6] pl-3">
        {[2, 3, 4].map((n) => (
          <button key={n} type="button" role="tab" aria-selected="false" className="w-[68px] text-left">
            Group {n}
          </button>
        ))}
        <button type="button" aria-label="Edit groups">
          <FaRegEdit className="size-[15px] text-[#c0c0c0]" />
        </button>
        <button type="button" className="mb-px ml-auto flex w-[122px] items-center justify-center gap-[7px] border border-[#cccccc] bg-[#f5f5f5] text-[#777]">
          Layout Focus: <FaBalanceScale className="h-4 w-5" />
        </button>
      </div>
    </div>
  );
}

export default function App() {
  return (
    <div className="flex h-screen overflow-hidden bg-white font-[Lato,sans-serif]">
      <Sidebar />
      <div className="flex min-w-0 flex-1 flex-col">
        <Header />
        <main className="flex min-h-0 flex-1 overflow-hidden pr-[42px] pl-[14px]">
          <div className="w-[375px] shrink-0">
            <input
              aria-label="Service"
              placeholder="Select Service..."
              className="mt-[10px] mb-px block h-[26px] w-[263px] rounded border border-[#e2e2e2] px-[7px] text-[14px] placeholder:text-[#555]"
            />
            <SiteList />
            <CrewPanel />
          </div>
          <div className="ml-[19px] w-[488px] shrink-0">
            <MapPanel />
            <SelectedList />
            <button type="button" className="mt-[13px] h-7 w-[127px] rounded border border-[#cccccc] bg-[#f5f5f5] text-[13px] text-[#777]">
              Clear All Selections
            </button>
          </div>
          <div className="ml-[18px] min-w-0 flex-1">
            <GroupTabs />
            <DayPanel />
            <ParkingPanel />
          </div>
        </main>
      </div>
      <ScrollTrack className="w-[19px] pt-[6px] pb-[5px]" thumb="mt-[46px] h-[859px]" />
    </div>
  );
}
